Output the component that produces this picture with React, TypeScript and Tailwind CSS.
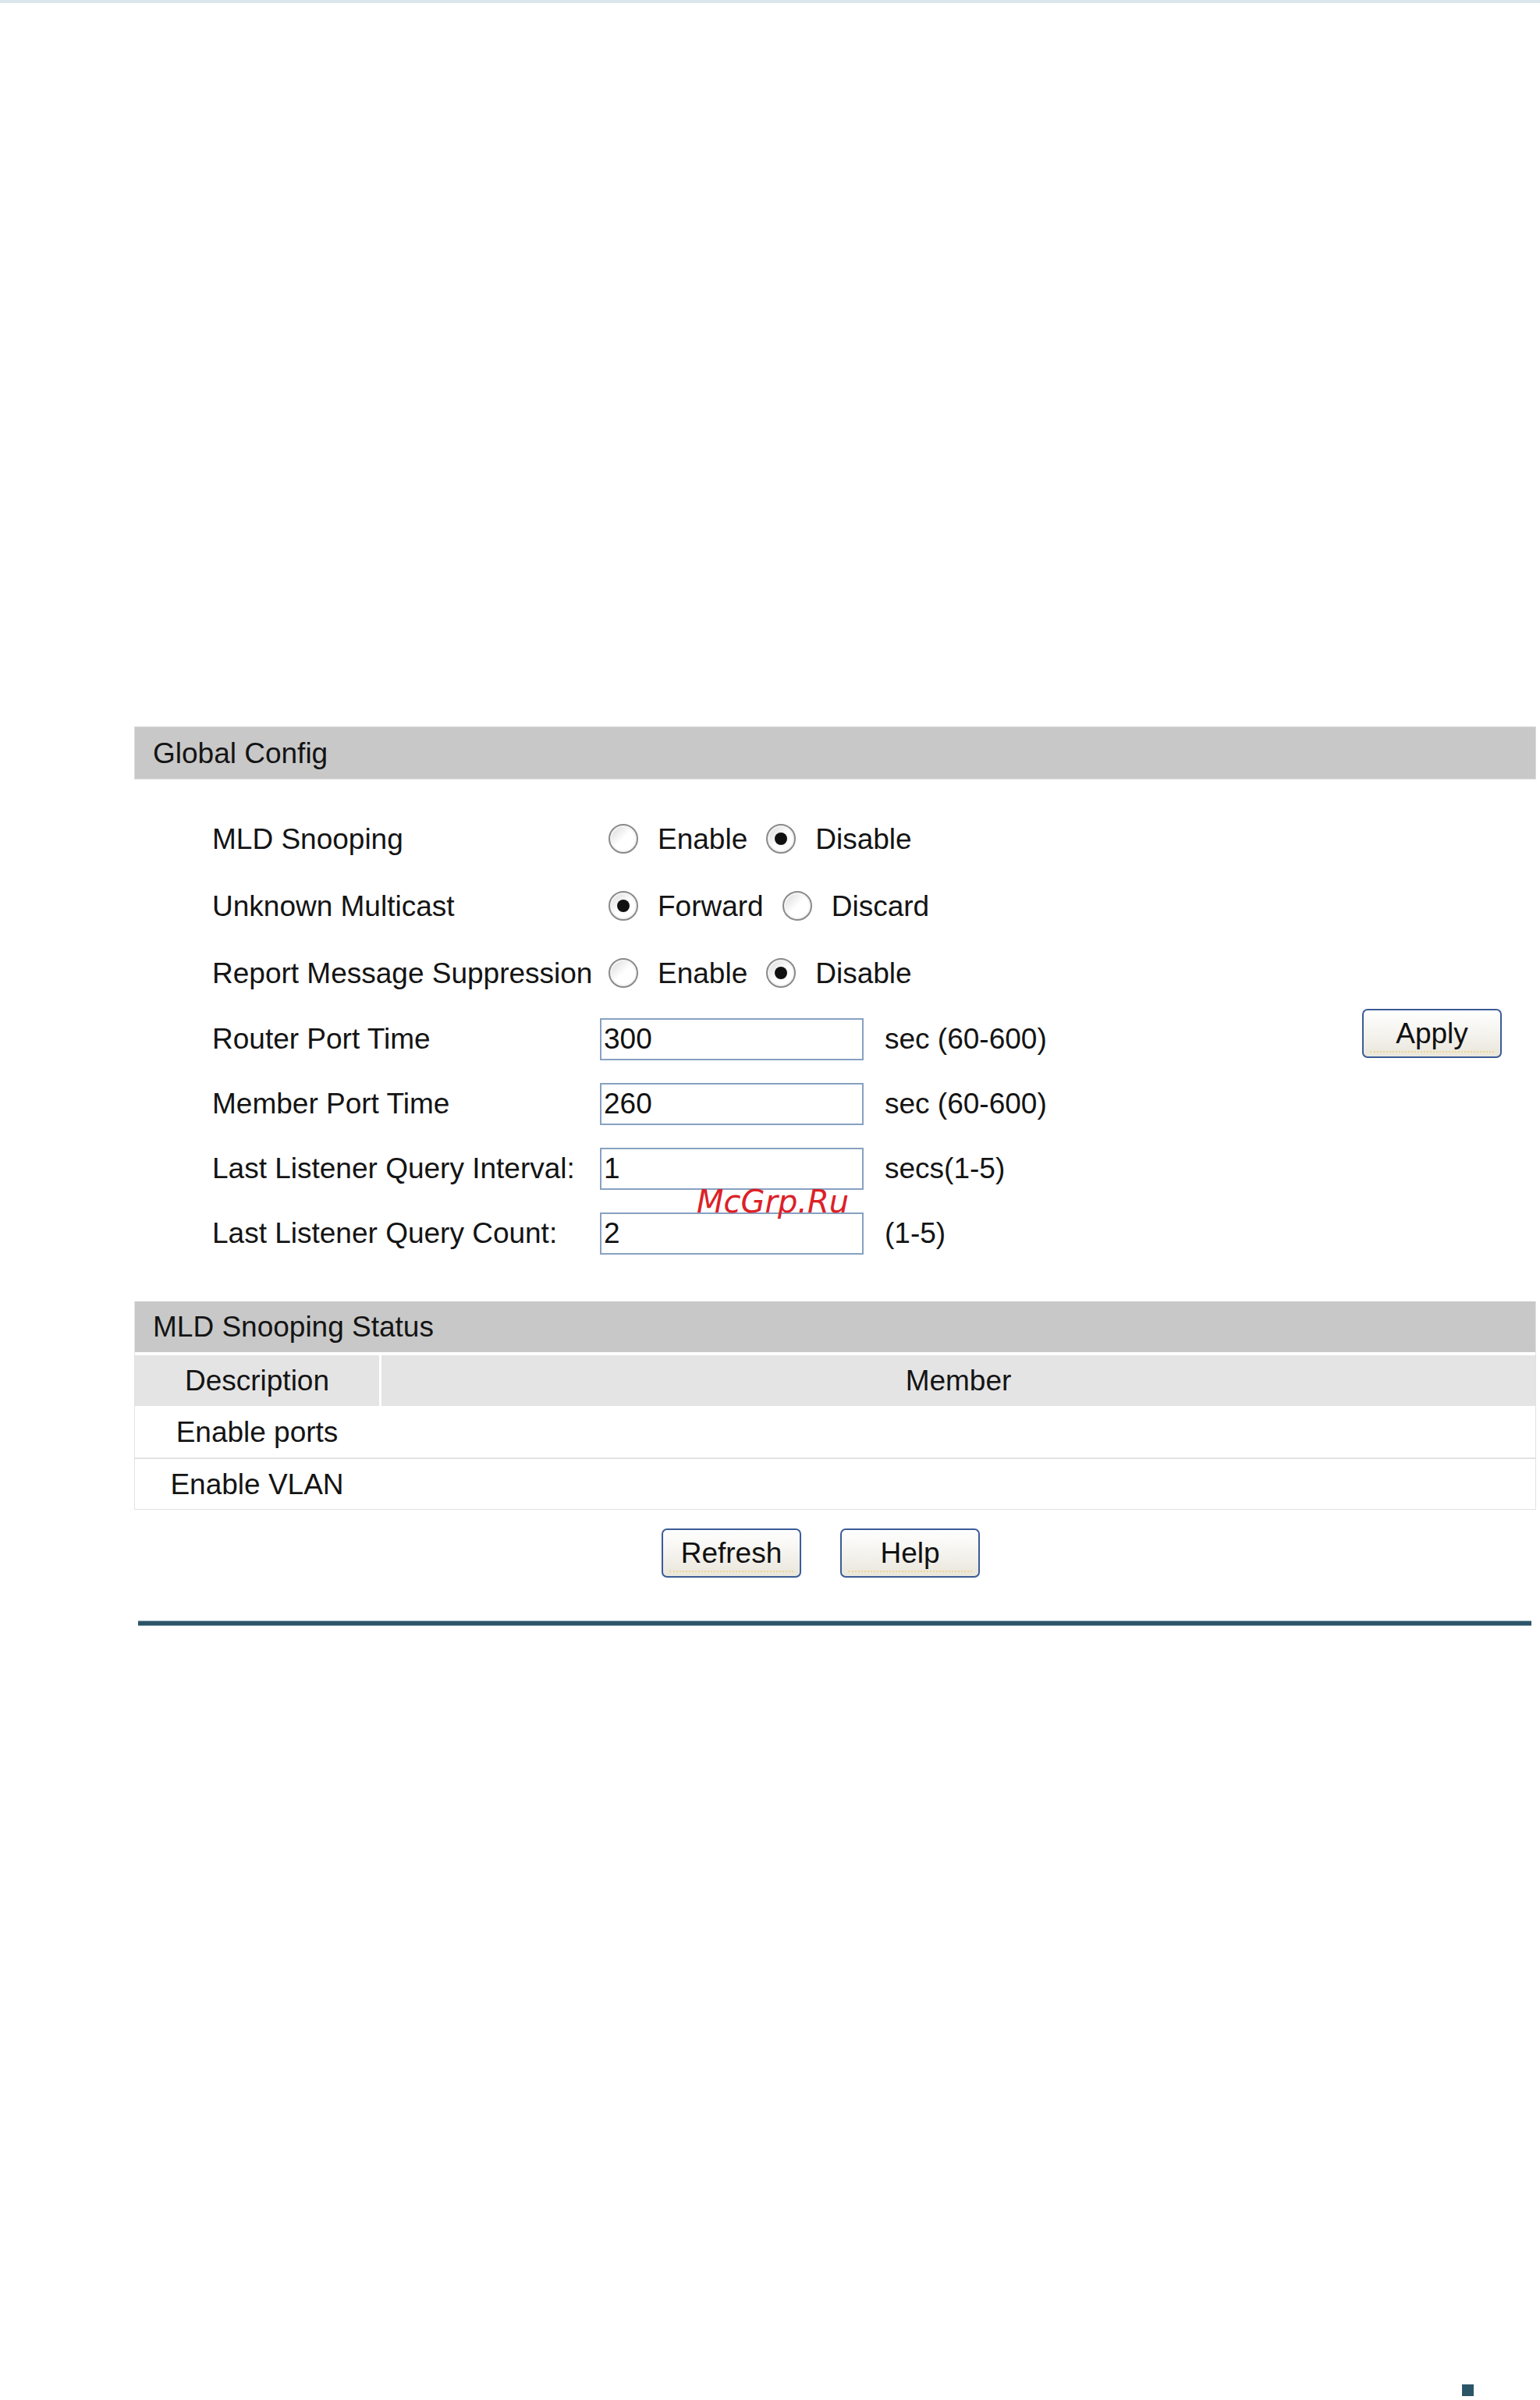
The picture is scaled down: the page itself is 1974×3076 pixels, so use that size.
import React from "react";

const font = "font-['Liberation_Sans',Arial,Helvetica,sans-serif]";

function Radio({ checked }: { checked?: boolean }) {
  return (
    <span className="flex h-[38px] w-[38px] shrink-0 items-center justify-center rounded-full border-2 border-[#8a8a8a] bg-gradient-to-br from-[#d6d6d6] via-white to-white shadow-[inset_0_0_0_2px_#f4f4f4]">
      {checked && <span className="h-[16px] w-[16px] rounded-full bg-[#111]" />}
    </span>
  );
}

function RadioGroup({ options, selected }: { options: string[]; selected: number }) {
  return (
    <div className="ml-[11px] flex items-center">
      {options.map((o, i) => (
        <div key={o} className="flex items-center">
          <Radio checked={i === selected} />
          <span className="ml-[25px] mr-[24px]">{o}</span>
        </div>
      ))}
    </div>
  );
}

function XpButton({ label, className = "" }: { label: string; className?: string }) {
  return (
    <button
      type="button"
      className={`relative flex h-[63px] w-[179px] items-center justify-center rounded-[7px] border-2 border-[#3b5c97] bg-gradient-to-b from-white via-[#f4f3ee] to-[#e9e6db] text-[37px] leading-none text-[#111] ${className}`}
    >
      <span className="relative">{label}</span>
      <span className="absolute bottom-[5px] left-[8px] right-[8px] border-b-2 border-dotted border-[#f0d58e]" />
    </button>
  );
}

function FieldRow({
  label,
  value,
  suffix,
  children,
}: {
  label: string;
  value: string;
  suffix: string;
  children?: React.ReactNode;
}) {
  return (
    <div className="flex h-[83px] items-center">
      <div className="w-[597px] shrink-0 whitespace-nowrap pl-[100px]">{label}</div>
      <input
        readOnly
        value={value}
        className="h-[54px] w-[338px] shrink-0 border-2 border-[#87a1c1] bg-white px-[3px] text-[37px] leading-none text-[#111] outline-none"
      />
      <span className="ml-[27px]">{suffix}</span>
      {children}
    </div>
  );
}

export default function App() {
  return (
    <div className={`relative h-[3076px] w-[1974px] overflow-hidden bg-white text-[37px] leading-none text-[#141414] ${font}`}>
      <div className="h-[4px] w-full bg-[#dbe5ec]" />

      <div className="ml-[172px] mt-[927px] w-[1797px]">
        {/* Global Config */}
        <div className="flex h-[68px] items-center border border-[#dcdcdc] bg-[#c8c8c8] pl-[23px]">Global Config</div>

        <div className="mt-[33px]">
          <div className="flex h-[86px] items-center">
            <div className="w-[597px] shrink-0 pl-[100px]">MLD Snooping</div>
            <RadioGroup options={["Enable", "Disable"]} selected={1} />
          </div>
          <div className="flex h-[86px] items-center">
            <div className="w-[597px] shrink-0 pl-[100px]">Unknown Multicast</div>
            <RadioGroup options={["Forward", "Discard"]} selected={0} />
          </div>
          <div className="flex h-[86px] items-center">
            <div className="w-[597px] shrink-0 whitespace-nowrap pl-[100px]">Report Message Suppression</div>
            <RadioGroup options={["Enable", "Disable"]} selected={1} />
          </div>

          <FieldRow label="Router Port Time" value="300" suffix="sec (60-600)">
            <XpButton label="Apply" className="mb-[14px] ml-auto mr-[44px]" />
          </FieldRow>
          <FieldRow label="Member Port Time" value="260" suffix="sec (60-600)" />
          <FieldRow label="Last Listener Query Interval:" value="1" suffix="secs(1-5)" />
          <FieldRow label="Last Listener Query Count:" value="2" suffix="(1-5)" />
        </div>

        {/* MLD Snooping Status */}
        <div className="mt-[46px] border-x border-b border-[#e2e2e2]">
          <div className="flex h-[65px] items-center bg-[#c8c8c8] pl-[23px]">MLD Snooping Status</div>
          <div className="mt-[4px] grid h-[65px] grid-cols-[313px_1fr] gap-x-[3px]">
            <div className="flex items-center justify-center bg-[#e4e4e4]">Description</div>
            <div className="flex items-center justify-center bg-[#e4e4e4]">Member</div>
          </div>
          <div className="grid h-[68px] grid-cols-[313px_1fr] gap-x-[3px] border-b-2 border-[#e2e2e2]">
            <div className="flex items-center justify-center">Enable ports</div>
            <div />
          </div>
          <div className="grid h-[64px] grid-cols-[313px_1fr] gap-x-[3px]">
            <div className="flex items-center justify-center">Enable VLAN</div>
            <div />
          </div>
        </div>

        <div className="mt-[24px] flex justify-center gap-[50px] pr-[37px]">
          <XpButton label="Refresh" />
          <XpButton label="Help" />
        </div>
      </div>

      {/* footer rule */}
      <div className="ml-[177px] mt-[55px] h-[7px] w-[1786px] border-y border-[#8fa7b3] bg-[#2c5468]" />

      <div className="mt-[972px] flex justify-end pr-[85px]">
        <div className="h-[15px] w-[15px] bg-[#2c5668]" />
      </div>

      <span className="absolute left-[893px] top-[1520px] font-['DejaVu_Sans',sans-serif] text-[40px] italic leading-none text-[#dc2127]">
        McGrp.Ru
      </span>
    </div>
  );
}
